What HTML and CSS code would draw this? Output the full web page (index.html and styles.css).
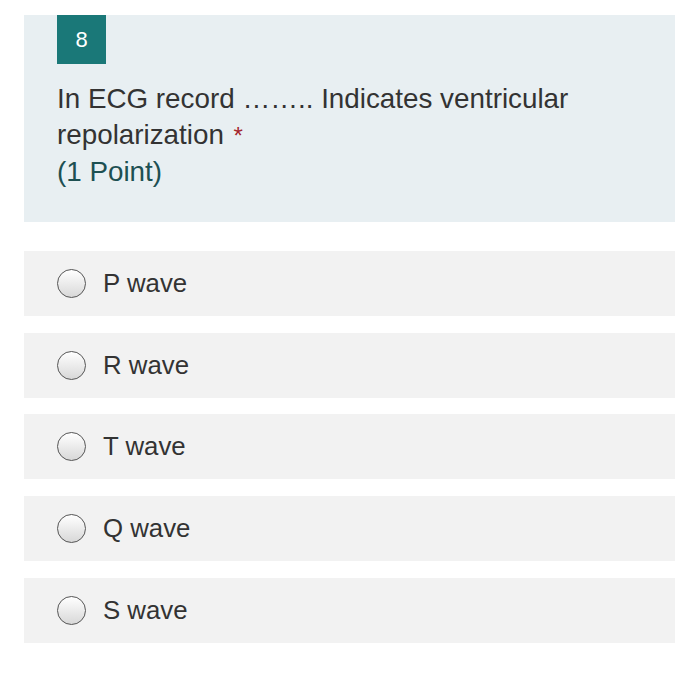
FILE: index.html
```html
<!DOCTYPE html>
<html>
<head>
<meta charset="utf-8">
<link rel="stylesheet" href="styles.css">
</head>
<body>
<div class="page">
  <div class="question">
    <div class="badge">8</div>
    <div class="qtext">
      In ECG record …….. Indicates ventricular repolarization <span class="req">*</span><br>
      <span class="points">(1 Point)</span>
    </div>
  </div>
  <div class="options">
    <div class="option"><span class="radio"></span><span class="label">P wave</span></div>
    <div class="option"><span class="radio"></span><span class="label">R wave</span></div>
    <div class="option"><span class="radio"></span><span class="label">T wave</span></div>
    <div class="option"><span class="radio"></span><span class="label">Q wave</span></div>
    <div class="option"><span class="radio"></span><span class="label">S wave</span></div>
  </div>
</div>
</body>
</html>
```
FILE: styles.css
```css
html, body {
  margin: 0;
  padding: 0;
  background: #ffffff;
}
body {
  font-family: "Liberation Sans", Arial, Helvetica, sans-serif;
  color: #333333;
}
.page {
  padding: 15px 25px 0 24px;
}
.question {
  background: #e8eff2;
  padding: 0 33px 32px 33px;
}
.badge {
  width: 49px;
  height: 49px;
  background: #1a7878;
  color: #ffffff;
  font-size: 22px;
  display: flex;
  align-items: center;
  justify-content: center;
}
.qtext {
  margin-top: 17px;
  font-size: 27.8px;
  line-height: 36px;
  color: #333333;
}
.req {
  color: #a4262c;
  margin-left: 2px;
  font-size: 24px;
}
.points {
  color: #1d5052;
}
.options {
  margin-top: 29px;
  display: flex;
  flex-direction: column;
  gap: 16.7px;
}
.option {
  height: 65px;
  background: #f2f2f2;
  display: flex;
  align-items: center;
  padding-left: 33px;
}
.radio {
  width: 27px;
  height: 27px;
  border-radius: 50%;
  border: 1.5px solid #555555;
  background: linear-gradient(#ffffff, #d8d8d8);
  flex: none;
}
.label {
  margin-left: 17px;
  font-size: 25.8px;
  color: #333333;
}
```
